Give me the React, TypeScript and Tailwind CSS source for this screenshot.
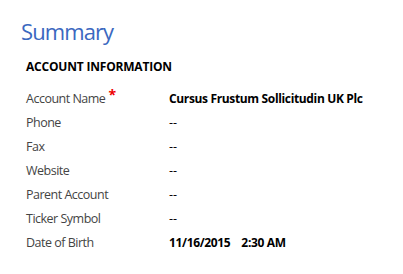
const fields: { label: string; value: string; required?: boolean; bold?: boolean }[] = [
  { label: 'Account Name', value: 'Cursus Frustum Sollicitudin UK Plc', required: true, bold: true },
  { label: 'Phone', value: '--' },
  { label: 'Fax', value: '--' },
  { label: 'Website', value: '--' },
  { label: 'Parent Account', value: '--' },
  { label: 'Ticker Symbol', value: '--' },
  { label: 'Date of Birth', value: '11/16/2015\u00a0\u00a0\u00a0\u00a02:30 AM', bold: true },
];

export default function App() {
  return (
    <main className="w-[403px] h-[274px] bg-white font-['Open_Sans',sans-serif] overflow-hidden">
      {/* Section title */}
      <h1 className="pl-[21px] pt-[16px] text-[22px] leading-[30px] tracking-[-0.9px] text-[#3b68c0]">Summary</h1>

      {/* Account information */}
      <div className="pl-[26px] pt-[13px]">
        <h2 className="text-[12px] leading-[16px] font-bold text-black tracking-[-0.2px]">ACCOUNT INFORMATION</h2>
        <div className="mt-[12px]">
          {fields.map((f) => (
            <div key={f.label} className="flex h-[24px] items-center text-[12.5px]">
              <div className="w-[143px] text-[#444] flex tracking-[-0.5px]">
                <span>{f.label}</span>
                {f.required && <span className="text-[#e00] ml-[3px] -mt-[6px] text-[14px] font-bold">*</span>}
              </div>
              <div className={f.bold ? 'font-bold text-black text-[12px] tracking-[-0.35px]' : 'text-black'}>{f.value}</div>
            </div>
          ))}
        </div>
      </div>
    </main>
  );
}
